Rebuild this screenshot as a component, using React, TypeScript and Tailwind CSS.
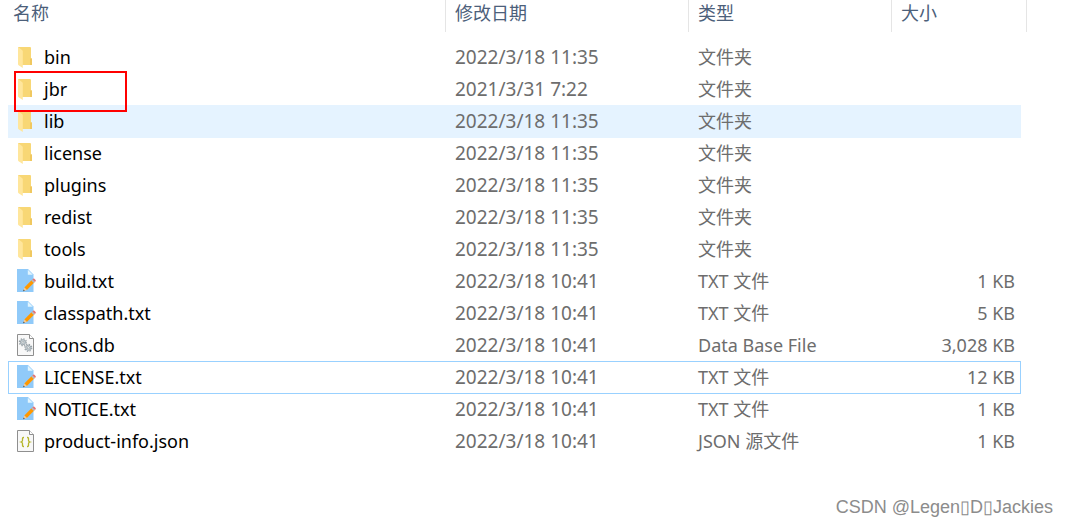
import React from "react";

type Kind = "folder" | "txt" | "db" | "json";

interface Entry {
  name: string;
  date: string;
  type: string;
  size?: string;
  kind: Kind;
  state?: "hover" | "focus" | "marked";
}

const folder = (name: string, date = "2022/3/18 11:35", state?: Entry["state"]): Entry => ({
  name,
  date,
  type: "文件夹",
  kind: "folder",
  state,
});

const file = (name: string, type: string, size: string, kind: Kind, state?: Entry["state"]): Entry => ({
  name,
  date: "2022/3/18 10:41",
  type,
  size,
  kind,
  state,
});

const entries: Entry[] = [
  folder("bin"),
  folder("jbr", "2021/3/31 7:22", "marked"),
  folder("lib", "2022/3/18 11:35", "hover"),
  folder("license"),
  folder("plugins"),
  folder("redist"),
  folder("tools"),
  file("build.txt", "TXT 文件", "1 KB", "txt"),
  file("classpath.txt", "TXT 文件", "5 KB", "txt"),
  file("icons.db", "Data Base File", "3,028 KB", "db"),
  file("LICENSE.txt", "TXT 文件", "12 KB", "txt", "focus"),
  file("NOTICE.txt", "TXT 文件", "1 KB", "txt"),
  file("product-info.json", "JSON 源文件", "1 KB", "json"),
];

function Page() {
  return (
    <>
      <path d="M1.500 1.500h12l4 4v17h-16z" fill="#f8f8f8" stroke="#8f8f8f" />
      <path d="M13.500 1.500v4h4" fill="#fff" stroke="#8f8f8f" />
    </>
  );
}

function Gear({ x, y }: { x: number; y: number }) {
  return (
    <g transform={`translate(${x} ${y})`} fill="none">
      <circle r="3.500" stroke="#98a2a8" strokeWidth="1.200" strokeDasharray="1.400 1.350" />
      <circle r="2.600" fill="#d3dde3" stroke="#8d979d" strokeWidth=".8" />
      <circle r="1.100" fill="#fff" stroke="#7c868c" strokeWidth=".6" />
    </g>
  );
}

function FileIcon({ kind }: { kind: Kind }) {
  return (
    <svg className="h-6 w-[22px] shrink-0" viewBox="0 0 22 24" aria-hidden="true">
      {kind === "folder" && (
        <>
          <path d="M2 2h12q1 0 1 1v10l1 1v6H6z" fill="#f8d775" />
          <path d="M15 13l1 1v6h-2v-6z" fill="#f0c860" />
          <path d="M2 2l4 3q.8.600.8 1.600V23L2.600 20.200Q2 19.800 2 19z" fill="#ffe69c" />
        </>
      )}
      {kind === "txt" && (
        <>
          <path d="M1 0h11l5.500 5.500V23H1z" fill="#90caf9" />
          <path d="M11.800 0.800v5h5z" fill="#e1f5fe" />
          <path d="M8.300 18.500l7.700-7.700 2.500 2.500-7.700 7.700z" fill="#ff9800" />
          <path d="M15.200 11.600l1.200-1.200 2.500 2.500-1.200 1.200z" fill="#b0bec5" />
          <path d="M16.400 10.400l.6-.6q.7-.6 1.400 0l1.200 1.200q.6.700 0 1.300l-.7.700z" fill="#e57373" />
          <path d="M8.300 18.500l2.500 2.500-3.600 1.200z" fill="#ffc98a" />
          <path d="M7.700 20.600l1.100 1.100-1.700.600z" fill="#37474f" />
        </>
      )}
      {kind === "db" && (
        <>
          <Page />
          <Gear x={6.900} y={9.200} />
          <Gear x={12.300} y={14.800} />
        </>
      )}
      {kind === "json" && (
        <>
          <Page />
          <path
            d="M8 8.500H7.500Q6.500 8.500 6.500 9.500v2Q6.500 12.500 5 13q1.500.500 1.500 1.500v2q0 1 1 1H8M11 8.500h.500q1 0 1 1v2q0 1 1.500 1.500-1.500.500-1.500 1.500v2q0 1-1 1H11"
            fill="none"
            stroke="#b5b52a"
            strokeWidth="1.300"
          />
        </>
      )}
    </svg>
  );
}

function rowClass(state: Entry["state"]) {
  if (state === "hover") return "[&>td:not(:last-child)]:bg-[#e5f3ff] [&>td:not(:last-child)]:shadow-[0_1px_0_#e5f3ff]";
  if (state === "focus")
    return "[&>td:not(:last-child)]:shadow-[inset_0_1px_0_#99d1ff,0_1px_0_#99d1ff] [&>td:first-child]:border-l [&>td:first-child]:border-[#99d1ff] [&>td:first-child]:pl-[7px] [&>td:nth-child(4)]:border-r [&>td:nth-child(4)]:border-[#99d1ff] [&>td:nth-child(4)]:pr-[5px]";
  return "";
}

function Heading({ label, first, span }: { label: string; first?: boolean; span?: number }) {
  return (
    <th scope="col" colSpan={span} className="p-0 pb-[9px] text-left font-normal">
      <button
        type="button"
        className={`flex h-8 w-full border-r border-[#e5e5e5] text-[18px] leading-[26px] text-[#4c607a] ${first ? "pl-[5px]" : "pl-[9px]"}`}
      >
        {label}
      </button>
    </th>
  );
}

export default function App() {
  return (
    <div className="flex min-h-screen flex-col justify-between bg-white font-['Noto_Sans','Noto_Sans_CJK_SC',sans-serif] text-[18px] text-[#6d6d6d]">
      <main className="pr-[41px] pl-2">
        <table className="w-full table-fixed border-separate border-spacing-0">
          <colgroup>
            <col />
            <col className="w-[243px]" />
            <col className="w-[203px]" />
            <col className="w-[129px]" />
            <col className="w-[6px]" />
          </colgroup>
          <thead>
            <tr>
              <Heading label="名称" first />
              <Heading label="修改日期" />
              <Heading label="类型" />
              <Heading label="大小" span={2} />
            </tr>
          </thead>
          <tbody className="leading-8">
            {entries.map((e) => (
              <tr key={e.name} className={rowClass(e.state)}>
                <td className="relative h-8 py-0 pr-0 pl-2 text-black">
                  <div className="flex h-8 items-center gap-[6px]">
                    <FileIcon kind={e.kind} />
                    <span>{e.name}</span>
                  </div>
                  {e.state === "marked" && (
                    <span className="absolute -top-0.5 left-1.5 z-10 h-[41px] w-[113px] border-2 border-[#ff0000]" />
                  )}
                </td>
                <td className="h-8 py-0 pr-0 pl-[9px] text-[19px]">{e.date}</td>
                <td className="h-8 py-0 pr-0 pl-[9px]">{e.type}</td>
                <td className="h-8 py-0 pr-[6px] pl-0 text-right">{e.size}</td>
                <td className="p-0" />
              </tr>
            ))}
          </tbody>
        </table>
      </main>
      <footer className="pr-[15px] pb-2 text-right font-['Liberation_Sans',sans-serif] text-[18px] leading-6 text-[#8c8c8c]">
        CSDN @Legen▯D▯Jackies
      </footer>
    </div>
  );
}
